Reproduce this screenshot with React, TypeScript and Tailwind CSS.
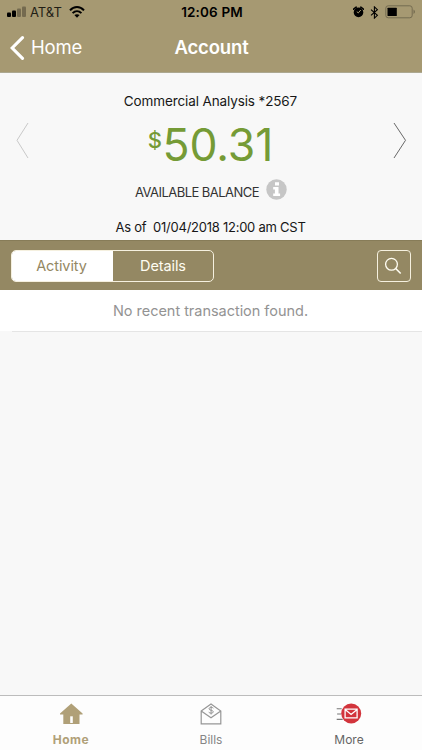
import React from "react";

function StatusBar() {
  return (
    <div className="flex h-6 items-center text-black">
      <div className="flex flex-1 items-center pl-[7px]">
        <svg width="19" height="12" viewBox="0 0 19 12">
          <rect x="0" y="6.5" width="4" height="4.5" rx="1" />
          <rect x="5" y="4.5" width="4" height="6.5" rx="1" />
          <rect x="10" y="2.5" width="4" height="8.5" rx="1" opacity=".3" />
          <rect x="15" y="0.5" width="4" height="10.5" rx="1" opacity=".3" />
        </svg>
        <span className="ml-1 w-[33px] text-[13px] leading-5 tracking-[0px] opacity-80">AT&amp;T</span>
        <svg className="ml-[6px]" width="16" height="12" viewBox="0 0 16 12" fill="none" stroke="currentColor" strokeWidth="2">
          <path d="M1 4.3C5-.1 11-.1 15 4.3M3.6 7.1c2.6-2.6 6.2-2.6 8.8 0" />
          <path d="M8 11.8 5.4 9.1c1.5-1.3 3.7-1.3 5.2 0Z" fill="currentColor" stroke="none" />
        </svg>
      </div>
      <span className="pl-[1px] text-[13.5px] font-semibold tracking-[0.15px]">12:06 PM</span>
      <div className="flex flex-1 items-center justify-end pr-[6px]">
        <svg width="11" height="12" viewBox="0 0 11 12">
          <circle cx="5.5" cy="6.4" r="4.8" />
          <path d="m.6 3.2 2.6-2M10.4 3.2l-2.6-2" stroke="currentColor" strokeWidth="1.6" strokeLinecap="round" />
          <path d="M5.3 6.9 7.8 4M5.5 6.9 3.8 5.8" stroke="#a69972" strokeWidth="1" />
        </svg>
        <svg className="ml-[6px]" width="9" height="13" viewBox="0 0 9 13" fill="none" stroke="currentColor" strokeWidth="1.1">
          <path d="m1 3.6 6.4 5.7-3 2.8V.9l3 2.8L1 9.4" />
        </svg>
        <svg className="ml-[6px]" width="31" height="14" viewBox="0 0 31 14">
          <rect x=".8" y=".8" width="26.4" height="12" rx="2.4" fill="none" stroke="#746b50" strokeWidth="1" />
          <rect x="2.5" y="2.7" width="9.3" height="8.3" rx=".5" />
          <path d="M28.5 4.6c2 1 2 3.5 0 4.5Z" fill="#746b50" />
        </svg>
      </div>
    </div>
  );
}

function BalancePanel() {
  return (
    <section className="flex h-[167px] items-start justify-between bg-[#f8f8f8] text-[#171717]">
      <svg className="ml-4 mt-[49px]" width="14" height="37" viewBox="0 0 14 37" fill="none" stroke="#c9c9c9" strokeWidth="1">
        <path d="M12 1 1 18.3 12 36" />
      </svg>
      <div className="flex flex-col items-center whitespace-nowrap pr-[2px]">
        <h2 className="mt-[18px] text-[13.5px] leading-5 tracking-[-0.12px]">Commercial Analysis *2567</h2>
        <div className="mt-[9px] flex h-[52px] items-start text-[#759b36]">
          <span className="mt-[7px] text-[22px] font-medium leading-[26px] tracking-[0.4px]">$</span>
          <span className="text-[44.5px] leading-[50px] tracking-[-0.1px]">50.31</span>
        </div>
        <div className="mt-[7px] flex h-[22px] items-start pl-px">
          <span className="mt-[3px] text-[13px] leading-5 tracking-[-0.54px] text-[#333]">AVAILABLE BALANCE</span>
          <svg className="ml-[7px]" width="21" height="21" viewBox="0 0 21 21">
            <circle cx="10.5" cy="10.5" r="10.2" fill="#c6c6c6" />
            <path d="M9 3.3h4v3.1H9zM7.2 8.1h5.3v6.4h1.6v2.4H7.2v-2.4h1.7v-4H7.2z" fill="#fff" />
          </svg>
        </div>
        <p className="mt-[16px] whitespace-pre text-[13px] leading-5 tracking-[-0.25px]">As of  01/04/2018 12:00 am CST</p>
      </div>
      <svg className="mr-[15px] mt-[49px]" width="14" height="37" viewBox="0 0 14 37" fill="none" stroke="#686868" strokeWidth="1">
        <path d="m1 1 11.5 17.3L1 36" />
      </svg>
    </section>
  );
}

function FilterBar() {
  return (
    <div className="flex h-[50px] items-center justify-between border-t border-[#877c58] bg-[#948863] pl-[11px] pr-[11px] text-[14.5px]">
      <div className="flex h-8 w-[203px] overflow-hidden rounded-[5px] border border-[#f5f0df]">
        <button className="w-[101px] bg-white pr-[2px] text-[#948863] tracking-[-0.1px]">Activity</button>
        <button className="flex-1 text-[#fffdf2] tracking-[-0.1px]">Details</button>
      </div>
      <button aria-label="Search" className="flex h-8 w-[34px] items-center justify-center rounded-[4px] border border-[#f5f0df]">
        <svg className="mr-[2px]" width="18" height="18" viewBox="0 0 18 18" fill="none" stroke="#fffdf2" strokeWidth="1.3">
          <circle cx="7.5" cy="7.3" r="5.9" />
          <path d="m11.7 11.5 5 5" strokeWidth="1.6" />
        </svg>
      </button>
    </div>
  );
}

function TabBar() {
  return (
    <nav className="grid h-[55px] grid-cols-[142px_138px_142px] border-t border-[#bcbcbc] bg-[#fdfdfd] text-[12px] leading-4 text-[#868686]">
      <div className="flex flex-col items-center pt-[7px] font-bold text-[#b0a078]">
        <svg width="24" height="22" viewBox="0 0 24 22">
          <path d="M12.3.6 23.6 10.6v.9h-3.1V21H4.3v-9.5H1v-.9Z" fill="currentColor" />
          <path d="M11.2 13.3h2.6V20h-2.6z" fill="#fdfdfd" />
        </svg>
        <span className="mt-[7px] tracking-[0.5px]">Home</span>
      </div>
      <div className="flex flex-col items-center pt-[7px]">
        <svg width="22" height="22" viewBox="0 0 22 22" fill="none" stroke="#969696" strokeWidth="1.2">
          <path d="M1.2 8 11 1l9.8 7v12.8H1.2ZM1.2 8 11 14.7 20.8 8" />
          <path d="M13.4 5.2c-1-1.3-4.4-1.2-4.4.6 0 1.9 4.3 1 4.3 3 0 1.8-3.5 1.8-4.6.4M11.1 3v8.5" strokeWidth="1" />
        </svg>
        <span className="mt-[7px]">Bills</span>
      </div>
      <div className="flex flex-col items-center pt-[7px] pr-[4px]">
        <svg width="26" height="22" viewBox="0 0 26 22" fill="none">
          <path d="M.7 5.7h5M1.1 11h4M.7 16.4h6" stroke="#777" strokeWidth="1.1" />
          <circle cx="15.2" cy="10.5" r="10" fill="#d2343c" />
          <path d="M9.1 6.1h12v8.8h-12zM9.1 6.4l6 5 6-5" stroke="#fff" strokeWidth="1.3" />
        </svg>
        <span className="mt-[7px] text-[#656565]">More</span>
      </div>
    </nav>
  );
}

export default function App() {
  return (
    <main className="flex h-[750px] w-[422px] flex-col overflow-hidden bg-[#f8f8f8] font-['Inter','Liberation_Sans',sans-serif]">
      <header className="h-[73px] border-b border-[#aca891] bg-[#a69972]">
        <StatusBar />
        <div className="grid h-12 grid-cols-[1fr_auto_1fr] items-center text-white">
          <div className="flex items-center pl-[10px] text-[18.5px] tracking-[-0.2px]">
            <svg width="15" height="24" viewBox="0 0 15 24" fill="none" stroke="currentColor" strokeWidth="3.1" strokeLinecap="round">
              <path d="M12.5 1.7 2.2 12l10.3 10.3" />
            </svg>
            <span className="ml-[6px]">Home</span>
          </div>
          <h1 className="pl-px text-[18.5px] font-semibold tracking-[-0.15px]">Account</h1>
        </div>
      </header>
      <BalancePanel />
      <FilterBar />
      <div className="h-[41px] bg-white text-center text-[14.5px] leading-[41px] tracking-[-0.03px] text-[#939393]">
        <span className="pr-px">No recent transaction found.</span>
      </div>
      <div className="ml-3 h-px bg-[#e5e5e5]" />
      <div className="flex-1" />
      <TabBar />
    </main>
  );
}
